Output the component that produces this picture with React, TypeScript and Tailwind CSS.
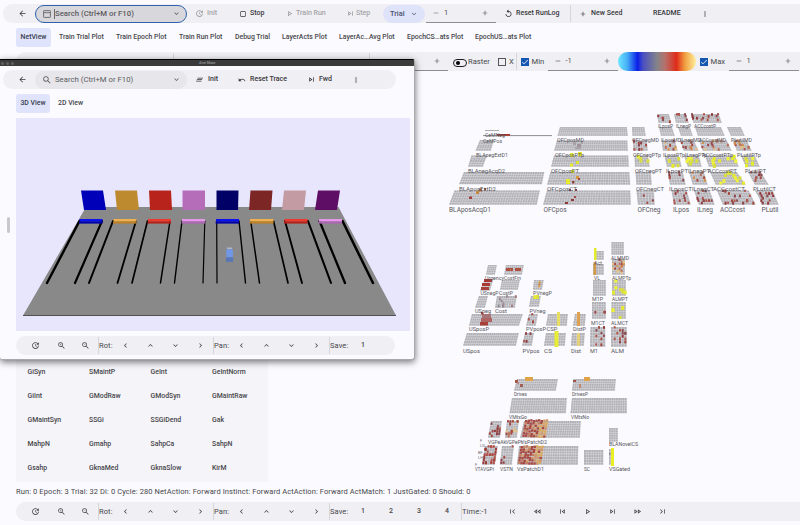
import React from "react";
import {
  MdArrowBack, MdSearch, MdKeyboardArrowDown, MdKeyboardArrowUp, MdKeyboardArrowLeft, MdKeyboardArrowRight,
  MdUpdate, MdOutlineCropSquare, MdOutlinePlayArrow, MdOutlineSkipNext, MdOutlineSkipPrevious, MdRemove, MdAdd,
  MdReplay, MdMoreVert, MdClearAll, MdUndo, MdZoomIn, MdZoomOut, MdFirstPage, MdLastPage,
  MdOutlineFastRewind, MdOutlineFastForward, MdCheck,
} from "react-icons/md";

type Kids = { children?: React.ReactNode };

/* Fixed-width toolbar slot; contents start at its left edge. */
const Slot = ({ w, c = "", children }: Kids & { w: string; c?: string }) => (
  <div className={`flex h-full shrink-0 items-center whitespace-nowrap ${w} ${c}`}>{children}</div>
);
const Ic = ({ w, c = "", children }: Kids & { w: string; c?: string }) => (
  <div className={`flex h-full shrink-0 items-center justify-center ${w} ${c}`}>{children}</div>
);
const Sep = () => <div className="h-[17px] w-px shrink-0 bg-[#d6d5da]" />;

function Spinner({ value, w = "w-[70px]" }: { value: string; w?: string }) {
  return (
    <div className={`flex h-[18px] shrink-0 items-center border-b border-[#8d8c92] text-[7.5px] text-[#55555b] ${w}`}>
      <Ic w="w-[18px]" c="pl-[2px]"><MdRemove size={8} /></Ic>
      <span className="grow">{value}</span>
      <Ic w="w-[22px]"><MdAdd size={8} /></Ic>
    </div>
  );
}

function SearchBox({ active }: { active?: boolean }) {
  return (
    <div className={`flex h-[18px] w-[152px] shrink-0 items-center rounded-full border text-[#5c5c62] ${active ? "border-[#2e62ad] bg-[#d8d7db]" : "border-[#e7e6ea] bg-[#e7e6ea]"}`}>
      <Ic w="w-[18px]" c="pl-[3px]">
        {active ? (
          <svg width="8" height="8" viewBox="0 0 8 8" fill="none" stroke="#55555b" strokeWidth="0.8">
            <rect x="0.6" y="0.6" width="6.8" height="6.8" rx="0.6" /><path d="M0.6 2.7h6.8" />
          </svg>
        ) : <MdSearch size={10} />}
      </Ic>
      <span className={`grow whitespace-nowrap text-[7.75px] leading-[10px] ${active ? "border-l border-[#6a6a70]" : "pl-px"}`}>Search (Ctrl+M or F10)</span>
      <Ic w="w-[20px]"><MdKeyboardArrowDown size={9} /></Ic>
    </div>
  );
}

const Check = ({ on }: { on?: boolean }) => (
  <div className={`flex h-[8px] w-[8px] items-center justify-center ${on ? "bg-[#1556b0] text-white" : "border border-[#55555a]"}`}>
    {on && <MdCheck size={8} />}
  </div>
);

function TopBar() {
  return (
    <div className="ml-[3px] mt-[4px] flex h-[19px] items-center overflow-hidden rounded-l-full bg-[#f0eff3] text-[7px] font-medium text-[#38383c]">
      <Ic w="w-[32px]" c="pl-[7px]"><MdArrowBack size={9} /></Ic>
      <SearchBox active />
      <Ic w="w-[20px]" c="pl-[5px] text-[#9b9ba0]"><MdUpdate size={9} /></Ic>
      <Slot w="w-[29px]" c="text-[#a5a5aa]">Init</Slot>
      <Ic w="w-[13px]"><MdOutlineCropSquare size={8} /></Ic>
      <Slot w="w-[34px]" c="pl-px">Stop</Slot>
      <Ic w="w-[12px]" c="text-[#9b9ba0]"><MdOutlinePlayArrow size={9} /></Ic>
      <Slot w="w-[49px]" c="pl-px text-[#a5a5aa]">Train Run</Slot>
      <Ic w="w-[12px]" c="text-[#9b9ba0]"><MdOutlineSkipNext size={9} /></Ic>
      <Slot w="w-[27px]" c="text-[#a5a5aa]">Step</Slot>
      <div className="flex h-[18px] w-[42px] shrink-0 items-center gap-[3px] rounded-full bg-[#dfe3f9] pl-[7px] text-[7.4px] text-[#47506a]">
        <span className="w-[17px]">Trial</span><MdKeyboardArrowDown size={8} />
      </div>
      <Slot w="w-[72px]" c="pl-px font-normal"><Spinner value="1" /></Slot>
      <Ic w="w-[18px]" c="pl-[5px]"><MdReplay size={9} /></Ic>
      <Slot w="w-[55px]" c="pl-px">Reset RunLog</Slot>
      <Sep />
      <Ic w="w-[20px]" c="pl-[4px]"><MdAdd size={8} /></Ic>
      <Slot w="w-[62px]">New Seed</Slot>
      <Slot w="w-[46px]">README</Slot>
      <Ic w="w-[12px]"><MdMoreVert size={8} /></Ic>
    </div>
  );
}

function Tabs() {
  return (
    <div className="mt-[5px] flex h-[19px] items-center text-[6.9px] font-medium text-[#47474c]">
      <Slot w="w-[35px]" c="ml-[16px] justify-center rounded-[3px] bg-[#dfe3fb] text-[#383d50]">NetView</Slot>
      <Slot w="w-[57px]" c="ml-[8px]">Train Trial Plot</Slot>
      <Slot w="w-[63px]">Train Epoch Plot</Slot>
      <Slot w="w-[56px]">Train Run Plot</Slot>
      <Slot w="w-[47px]">Debug Trial</Slot>
      <Slot w="w-[57px]">LayerActs Plot</Slot>
      <Slot w="w-[68px]">LayerAc…Avg Plot</Slot>
      <Slot w="w-[68px]">EpochCS…ats Plot</Slot>
      <Slot w="w-[68px]">EpochUS…ats Plot</Slot>
    </div>
  );
}

function ViewBar() {
  return (
    <div className="ml-[16px] mt-[5px] flex h-[19px] items-center rounded-l-full bg-[#f0eff3] text-[7.6px] text-[#47474c]">
      <Slot w="w-[157px]" />
      <Sep />
      <Slot w="w-[195px]" />
      <Sep />
      <Slot w="w-[78px]" c="justify-end"><Spinner value="" w="w-[78px]" /></Slot>
      <Ic w="w-[20px]" c="pl-[4px] pt-[2px]">
        <div className="flex h-[8px] w-[14px] items-center rounded-full border border-[#1d1d20] pl-[2px]"><div className="h-[4px] w-[4px] rounded-full bg-black" /></div>
      </Ic>
      <Slot w="w-[30px]">Raster</Slot>
      <Slot w="w-[11px]"><Check /></Slot>
      <Slot w="w-[7px]">X</Slot>
      <Sep />
      <Slot w="w-[14.5px]" c="pl-[4px]"><Check on /></Slot>
      <Slot w="w-[16px]">Min</Slot>
      <Spinner value="-1" />
      <div className="h-[19px] w-[78px] shrink-0 rounded-full bg-[linear-gradient(90deg,#6ee6ff_0%,#45aef5_12%,#0b1fe8_25%,#4a4fc0_32%,#84848a_50%,#b5726c_60%,#e02c1a_75%,#f0a040_86%,#ffef9e_100%)]" />
      <Slot w="w-[15px]" c="pl-[4px]"><Check on /></Slot>
      <Slot w="w-[18px]">Max</Slot>
      <Spinner value="1" />
    </div>
  );
}

/* Orbit / pan / save controls shared by both 3D views. */
function SceneControls({ full }: { full?: boolean }) {
  const arrows = (
    <>
      <Ic w="w-[25px]"><MdKeyboardArrowLeft size={9} /></Ic>
      <Ic w="w-[25px]"><MdKeyboardArrowUp size={9} /></Ic>
      <Ic w="w-[25px]"><MdKeyboardArrowDown size={9} /></Ic>
      <Ic w="w-[25px]"><MdKeyboardArrowRight size={9} /></Ic>
    </>
  );
  return (
    <div className={`ml-[16px] flex h-[19px] shrink-0 items-center overflow-hidden bg-[#f0eff3] text-[#47474c] ${full ? "rounded-l-full" : "w-[379px] rounded-full"}`}>
      <Ic w="w-[39px]"><MdUpdate size={9} /></Ic>
      <Ic w="w-[13px]"><MdZoomIn size={9} /></Ic>
      <Ic w="w-[30px]" c="pl-[5px]"><MdZoomOut size={9} /></Ic>
      <Sep />
      <Slot w="w-[14px]" c="text-[7.5px] tracking-[0.1px]">Rot:</Slot>
      {arrows}
      <Sep />
      <Slot w="w-[15px]" c="text-[7.5px] tracking-[0.1px]">Pan:</Slot>
      {arrows}
      <Sep />
      <Slot w="w-[19px]" c="text-[7.5px] tracking-[0.1px]">Save:</Slot>
      <Ic w="w-[28px]" c="text-[7px] font-medium">1</Ic>
      {full && (
        <>
          <Ic w="w-[28px]" c="text-[7px] font-medium">2</Ic>
          <Ic w="w-[28px]" c="text-[7px] font-medium">3</Ic>
          <Ic w="w-[28px]" c="text-[7px] font-medium">4</Ic>
          <Sep />
          <Slot w="w-[38px]" c="text-[7.5px] tracking-[0.1px]">Time:-1</Slot>
          <Ic w="w-[25px]"><MdFirstPage size={9} /></Ic>
          <Ic w="w-[25px]"><MdOutlineFastRewind size={9} /></Ic>
          <Ic w="w-[25px]"><MdOutlineSkipPrevious size={9} /></Ic>
          <Ic w="w-[25px]"><MdOutlinePlayArrow size={9} /></Ic>
          <Ic w="w-[25px]"><MdOutlineSkipNext size={9} /></Ic>
          <Ic w="w-[25px]"><MdOutlineFastForward size={9} /></Ic>
          <Ic w="w-[25px]"><MdLastPage size={9} /></Ic>
        </>
      )}
    </div>
  );
}

const vars = [
  "GiSyn", "SMaintP", "GeInt", "GeIntNorm", "GiInt", "GModRaw", "GModSyn", "GMaintRaw", "GMaintSyn", "SSGi",
  "SSGiDend", "Gak", "MahpN", "Gmahp", "SahpCa", "SahpN", "Gsahp", "GknaMed", "GknaSlow", "KirM",
];

/* name, label x, label baseline, label width, topL, topR, botL, botR, yTop, yBot, cols, rows, active cells */
type Layer = [string, number, number, number, number, number, number, number, number, number, number, number, string];
const layers: Layer[] = [
  ["OFCposMD", 557, 142, 27, 560, 627, 557.5, 628, 127, 136, 34, 5, ""],
  ["OFCnegMD", 632, 142, 27, 632, 644.5, 632.5, 646, 127, 136, 6, 5, ""],
  ["ILposP", 658, 127.5, 15, 657, 669, 658.5, 671.5, 114, 123, 6, 5, "r5"],
  ["ILnegP", 676, 127.5, 15, 674, 686, 676, 689, 114, 123, 6, 5, "r6"],
  ["ACCcostP", 694, 127.5, 22, 691, 719, 693.5, 722, 114, 123, 14, 5, "r13"],
  ["ILposMD", 661, 142, 20, 659, 672, 661, 675, 127, 136, 6, 5, ""],
  ["ILnegMD", 680, 142, 21, 678, 690, 681, 693, 127, 136, 6, 5, ""],
  ["ACCcostMD", 699, 142, 27, 695, 721, 698, 725, 127, 136, 13, 5, ""],
  ["PLutilMD", 731, 142, 21, 727, 741, 731, 745, 127, 136, 6, 5, ""],
  ["CeMPos", 483, 142.5, 19, 480, 494, 475.5, 491, 140, 151, 6, 5, ""],
  ["OFCposPTp", 555, 156.5, 29, 557, 627.5, 554, 628, 140.5, 151, 34, 5, ""],
  ["OFCnegPTp", 633, 156.5, 28, 633, 647, 633.5, 648, 140.5, 151, 6, 5, "r9"],
  ["ILposPTp", 663, 156.5, 22, 661.5, 675, 663, 678, 140.5, 151, 6, 5, "m8"],
  ["ILnegPTp", 685, 156.5, 22, 680, 694, 684, 699, 140.5, 151, 6, 5, "m10"],
  ["ACCcostPTp", 702, 156.5, 31, 699, 727, 703, 732, 140.5, 151, 13, 5, "m15"],
  ["PLutilPTp", 737, 156.5, 24, 733, 747, 737, 752, 140.5, 151, 6, 5, "m15"],
  ["BLApegExtD1", 476, 156.5, 32, 471.5, 487, 468, 483, 155.5, 167, 6, 5, ""],
  ["OFCposPT", 551, 173, 28, 554, 628.5, 551, 629, 155.5, 167, 34, 5, ""],
  ["OFCnegPT", 635, 173, 27, 634.5, 648, 635, 650, 155.5, 167, 6, 5, "y4"],
  ["ILposPT", 666, 173, 22, 664.5, 679, 667, 682, 155.5, 167, 6, 5, "y5"],
  ["ILnegPT", 688, 173, 22, 684, 699, 688, 702, 155.5, 167, 6, 5, "y7"],
  ["ACCcostPT", 708, 173, 29, 705, 735, 709, 739, 155.5, 167, 13, 5, "y10"],
  ["PLutilPT", 745, 173, 21, 741, 755, 746, 760, 155.5, 167, 6, 5, "y5"],
  ["BLAnegAcqD2", 468, 172.5, 37, 464, 544.5, 459, 542, 172, 184.5, 35, 5, ""],
  ["OFCposCT", 547, 191, 30, 550.5, 629.5, 547, 630.5, 172, 185, 34, 5, ""],
  ["OFCnegCT", 636, 191, 28, 635.5, 651, 636.5, 652, 172, 185, 6, 5, ""],
  ["ILposCT", 669, 191, 23, 668, 683, 670, 686, 172, 185, 6, 5, "r8"],
  ["ILnegCT", 692, 191, 22, 689, 704, 693, 708, 172, 185, 6, 5, "m9"],
  ["ACCcostCT", 713, 191, 32, 710, 737, 716, 746, 172, 185, 13, 5, "y10"],
  ["PLutilCT", 753, 191, 23, 748, 761, 755, 769, 172, 185, 6, 5, "r10"],
  ["BLAposExtD2", 459, 190.5, 37, 454.5, 540, 449, 537, 190.5, 205, 35, 6, ""],
  ["BLAposAcqD1", 449, 211.5, 42, 0, 0, 0, 0, 0, 0, 0, 0, ""],
  ["OFCpos", 543.5, 211.5, 23, 547, 630.5, 543, 631, 190.5, 205, 34, 6, ""],
  ["OFCneg", 637.5, 211.5, 23, 636.5, 654, 638, 655, 190.5, 205, 6, 6, "r3"],
  ["ILpos", 673, 211.5, 16, 671.5, 687, 674, 691, 190.5, 205, 6, 6, "r10"],
  ["ILneg", 697, 211.5, 16, 694, 710, 699, 715, 190.5, 205, 6, 6, "r13"],
  ["ACCcost", 720, 211.5, 25, 717, 749, 723, 756, 190.5, 205, 13, 6, "r21"],
  ["PLutil", 761.5, 211.5, 17, 755, 773, 763, 779, 190.5, 205, 6, 6, "r14"],
  ["Urgency", 485, 279.5, 19, 488, 497, 486, 495, 265, 275, 5, 5, ""],
  ["CostFin", 504, 279.5, 17, 506, 524, 504, 522, 265, 275, 9, 5, ""],
  ["USnegP", 480.5, 295, 18, 484, 493, 480, 490, 281, 291, 5, 5, ""],
  ["CostP", 499, 295, 14, 502, 520, 500, 518, 280, 290, 9, 5, ""],
  ["USneg", 475, 313, 16, 479, 488, 475, 485, 296, 308, 5, 5, ""],
  ["Cost", 495, 313, 12, 497, 517, 495, 515, 296, 308, 9, 5, "g9"],
  ["USposP", 469, 331, 20, 472, 523, 469, 519, 314, 326, 25, 5, ""],
  ["USpos", 463, 352.5, 17, 467, 519, 463, 516, 333, 346, 25, 5, ""],
  ["PVnegP", 533, 295, 19, 534, 544, 533, 542, 280, 290, 4, 5, "o3"],
  ["PVneg", 529.5, 313, 16, 531, 541, 529, 539, 296, 307, 4, 5, "y3"],
  ["PVposP", 526, 331, 20, 529, 538, 526, 536, 314, 326, 4, 5, "r3"],
  ["CSP", 546.5, 331, 11, 548, 568, 546, 567, 314, 326, 9, 5, ""],
  ["PVpos", 522.5, 352.5, 17, 525, 534, 522, 532, 333, 346, 4, 5, "r4"],
  ["CS", 544, 352.5, 8, 546, 566, 544, 565, 333, 346, 9, 5, ""],
  ["DistP", 573, 331, 13, 575, 586, 573, 585, 314, 326, 5, 5, ""],
  ["Dist", 571, 352.5, 10, 572, 585, 571, 584, 333, 346, 5, 5, ""],
  ["Act", 594, 265, 8, 594, 604, 594, 604, 251, 260, 4, 4, ""],
  ["VL", 594, 279.5, 6, 593, 604, 593, 604, 264, 275, 4, 4, ""],
  ["M1P", 592, 301, 11, 593, 606, 593, 606, 280, 296, 6, 7, ""],
  ["M1CT", 591, 325, 14, 592, 606, 592, 606, 302, 319, 6, 7, "r4"],
  ["M1", 590, 352.5, 8, 590.5, 605.5, 590, 605.5, 327, 347, 6, 7, "r10"],
  ["ALMMD", 611, 260, 18, 611.5, 624, 611.5, 624, 242, 255, 6, 6, ""],
  ["ALMPTp", 612, 279.5, 19, 612, 625, 612, 625, 259, 275, 6, 7, "m19"],
  ["ALMPT", 612, 301, 16, 612, 626, 612, 626, 280, 296, 6, 7, "y7"],
  ["ALMCT", 611, 325, 17, 611.5, 626, 611.5, 626, 302, 319, 6, 7, "y4"],
  ["ALM", 611, 352.5, 13, 611, 627, 611, 627, 327, 347, 6, 7, "r14"],
  ["Drives", 514, 396, 13, 517, 558, 514, 556, 379, 391, 20, 5, ""],
  ["DrivesP", 572, 396, 16, 573.5, 616, 572, 615, 379, 391, 20, 5, ""],
  ["VMtxGo", 509, 418.5, 18, 512, 567, 509.5, 566, 398, 413.5, 25, 6, ""],
  ["VMtxNo", 571, 418.5, 18, 572, 627, 570.5, 627, 398, 413.5, 25, 6, ""],
  ["VGPeAk", 488, 443.5, 18, 491, 502, 488, 500, 421, 438, 5, 7, "r13"],
  ["VGPePr", 505.5, 443.5, 17, 507, 519, 505, 517, 421, 438, 5, 7, "m19"],
  ["VsPatchD2", 521, 443.5, 26, 524, 581, 520, 580, 421, 438, 26, 7, ""],
  ["VGPi", 483, 470.5, 11, 485, 498, 482, 495, 446, 465, 5, 7, "d30"],
  ["VSTN", 500, 470.5, 13, 502, 514, 500, 512, 446, 465, 5, 7, "r5"],
  ["VsPatchD1", 517, 470.5, 27, 519, 578.5, 517, 578, 446, 465, 26, 7, ""],
  ["SC", 584, 470.5, 6, 584, 603.5, 584, 603.5, 450, 465, 8, 6, ""],
  ["BLANovelCS", 609, 445.5, 29, 609, 618, 609, 618, 428, 442, 4, 6, ""],
  ["VSGated", 609, 470.5, 21, 609, 613, 609, 613, 449, 465, 2, 6, ""],
  ["VTA", 475, 470.5, 8, 0, 0, 0, 0, 0, 0, 0, 0, ""],
];

/* Raised units drawn over their layers: x, y, w, h, colour */
const marks: [number, number, number, number, string][] = [
  [485, 130, 14, 0.8, "#98989c"], [483, 135, 69, 1.1, "#97979c"], [497, 134, 13, 1.8, "#a7332b"],
  [476, 191, 3, 3, "#c8873a"], [479, 188.5, 3, 3, "#b56a3c"], [484, 188, 2, 2.5, "#a34a35"], [469, 196.5, 3, 2.5, "#a04040"],
  [573, 142, 3, 3, "#a9a0a4"], [577, 144, 4, 3, "#9e9499"], [581, 141, 2, 3, "#a9a0a4"], [575, 147, 6, 2, "#aaa2a6"],
  [570, 153, 3.5, 4, "#e6ec2b"], [578, 152, 4, 4, "#e6ec2b"], [570, 163.5, 3, 3, "#e6ec2b"], [576, 161, 3, 3, "#dce32c"],
  [571, 170, 3, 3, "#e6ec2b"], [566, 179, 4, 5, "#e6ec2b"], [572, 181, 2.4, 2.4, "#963c3c"], [576, 176, 3, 3, "#d99a3c"], [578, 178, 2, 2, "#a34040"],
  [565, 202, 3, 2, "#913a3e"], [571, 199, 3, 2, "#913a3e"], [574, 196, 2, 2, "#a24a4c"], [569, 189, 2, 2, "#7e3c3e"], [575, 189, 2, 2, "#913a3e"],
  [506, 268, 7, 3, "#ad4f43"], [515, 268, 6, 3, "#ad4f43"], [510, 269, 1, 1.4, "#c58b3c"],
  [484, 279, 8, 3, "#a93a34"], [482, 283, 8, 3, "#a93a34"], [481, 287, 8, 3, "#a8423a"],
  [482, 314, 9, 4, "#a47476"], [481, 318, 11, 4, "#ad6462"], [480, 322, 8, 3.5, "#a83e38"], [481, 312, 2.5, 2.5, "#a04040"],
  [557, 312, 3, 14, "#e7df62"], [554.5, 331, 4, 16, "#e7ec35"], [577, 312, 3, 14, "#dda151"], [577, 333, 3, 13, "#e5cf78"],
  [594, 248, 2.5, 12, "#e4ea2c"], [593.5, 262, 2.5, 13, "#d49947"],
  [525, 377, 8, 4, "#dfa34a"], [515, 380, 3, 3, "#a65248"], [520, 384, 3, 3, "#a06054"], [517, 382, 2, 2, "#b28c84"],
  [584, 377, 6, 4, "#dfa34a"], [573, 380, 3, 2, "#a65248"], [579, 384, 2, 4, "#c08a72"],
  [609, 453, 1.5, 1.5, "#777777"], [611, 448, 3, 18, "#e8ef22"],
];

const P: Record<string, string[]> = {
  r: ["#913a3e", "#a34840", "#8a4a50", "#b0564c"],
  y: ["#e4ea2c", "#eef13a", "#d8dd42"],
  m: ["#a9493e", "#d58f4c", "#b9705a", "#9a4a48", "#dfc28a"],
  o: ["#d9a04e", "#b57a5a"],
  g: ["#9c8b8e", "#a87c7e", "#948a8e"],
  d: ["#a8423a", "#b4544a", "#9c3a36"],
};

function Grid({ l, seed }: { l: Layer; seed: number }) {
  const [, , , , tl, tr, bl, br, yt, yb, cols, rows, act] = l;
  if (!cols) return null;
  const at = (u: number, v: number) => {
    const x0 = tl + (bl - tl) * v, x1 = tr + (br - tr) * v;
    return [x0 + (x1 - x0) * u, yt + (yb - yt) * v];
  };
  const cell = (c: number, r: number) => {
    const p = [at(c / cols, r / rows), at((c + 0.82) / cols, r / rows), at((c + 0.82) / cols, (r + 0.8) / rows), at(c / cols, (r + 0.8) / rows)];
    return "M" + p.map((q) => q[0].toFixed(2) + " " + q[1].toFixed(2)).join("L") + "Z";
  };
  let d = "";
  for (let c = 0; c < cols; c++) for (let r = 0; r < rows; r++) d += cell(c, r);
  let s = seed * 7919 + 17;
  const rnd = () => ((s = (s * 16807) % 2147483647) / 2147483647);
  for (let k = 0; k < 5; k++) rnd();
  const kind = act[0];
  const n = act ? parseInt(act.slice(1)) : 0;
  const big = kind === "y" ? 3 : 2;
  return (
    <g>
      <path d={`M${tl} ${yt}L${tr} ${yt}L${br} ${yb}L${bl} ${yb}Z`} fill="#dddde1" />
      <path d={d} fill="#b1b0b6" />
      {Array.from({ length: n }, (_, i) => {
        const [x, y] = at(Math.floor(rnd() * cols) / cols, Math.floor(rnd() * rows) / rows);
        return <rect key={i} x={x} y={y - 0.8} width={big} height={big + rnd()} fill={P[kind][Math.floor(rnd() * P[kind].length)]} />;
      })}
    </g>
  );
}

/* Dense activity blocks at the left of each patch layer. */
function Patch({ x, y, h }: { x: number; y: number; h: number }) {
  const out = [];
  const n = 9;
  for (let c = 0; c < n; c++)
    for (let r = 0; r < 7; r++) {
      const k = (c * 31 + r * 17 + c * r * 7 + y) % 10;
      const col = c < 6 ? (k < 7 ? "#a94a42" : k < 9 ? "#c47e62" : "#d6a070") : k < 5 ? "#dca85c" : k < 7 ? "#a94a42" : "#cf9468";
      out.push(<rect key={c + "-" + r} x={x + c * 2.6 - r * 0.45} y={y + (r * h) / 7 - (k % 3) * 0.4} width={2.4} height={h / 7 - 0.3} fill={col} />);
    }
  return <g>{out}</g>;
}

function NetView() {
  return (
    <svg className="ml-[430px] block h-[411px] w-[370px] shrink-0" viewBox="430 71 370 411" fontFamily="Roboto, sans-serif">
      {layers.map((l, i) => <Grid key={i} l={l} seed={i + 3} />)}
      <Patch x={525} y={420} h={18} />
      <Patch x={520.5} y={446} h={19} />
      {marks.map((m, i) => <rect key={i} x={m[0]} y={m[1]} width={m[2]} height={m[3]} fill={m[4]} />)}
      {layers.map((l, i) => (
        <text key={i} x={l[1]} y={l[2]} textLength={l[3]} lengthAdjust="spacingAndGlyphs" fontSize={l[2] > 390 ? 5 : l[2] > 215 ? 5.6 : l[2] > 200 ? 6.8 : 5.9} fill="#55555a">{l[0]}</text>
      ))}
      <text x={485} y={137} textLength={20} lengthAdjust="spacingAndGlyphs" fontSize="5" fill="#55555a">CeMNeg</text>
      <g fontSize="4" fill="#68686d">
        <text x="480" y="441.5">F</text><text x="480" y="446.5">LD</text>
        <text x="478" y="453.5">BF</text><text x="478" y="459">LH</text><text x="475" y="465.5">F</text>
      </g>
    </svg>
  );
}

const boxes: [string, string][] = [
  ["81,190.5 103,190.5 106,210 84,210", "#0000b9"],
  ["115,190.5 137,190.5 139,210 117,210", "#bd8a30"],
  ["149,190.5 171,190.5 172,210 150,210", "#b8241b"],
  ["182.5,190.5 205,190.5 205,210 182.5,210", "#b56dba"],
  ["216.5,190.5 238.5,190.5 238,210 216.5,210", "#000066"],
  ["250.5,190.5 272.5,190.5 271,210 249,210", "#7d2626"],
  ["284,190.5 306,190.5 304,210 282,210", "#c39ba2"],
  ["318,190.5 340,190.5 337,210 315,210", "#5f0e66"],
];
const bars: [number, number, string, string][] = [
  [79.5, 102.5, "#0a10ee", "#0000a8"], [113.5, 136.5, "#f0b050", "#b98028"], [148, 171, "#ee3a2c", "#b3241c"], [182, 205, "#e598ea", "#ab68b2"],
  [216, 239, "#0a10ee", "#0000a8"], [250, 273.5, "#f0b050", "#b98028"], [284.5, 307.5, "#ee3a2c", "#b3241c"], [319, 342, "#e598ea", "#ab68b2"],
];
const walls: [number, number, number][] = [
  [79.5, 47, 2.4], [102, 75, 2.2], [113, 89, 2], [136, 117.5, 1.8], [147.5, 132, 1.7], [170, 160.5, 1.5], [182, 174.5, 1.4], [204.8, 203, 1.2],
  [216.7, 217, 1.2], [239, 245.5, 1.4], [250.7, 259.5, 1.5], [273.5, 288, 1.7], [285, 302, 1.9], [308, 331, 2.1], [319.5, 345, 2.3], [342.5, 373, 2.5],
];

function Arena() {
  return (
    <svg className="ml-[16px] mt-[5px] block h-[213px] w-[394px] shrink-0 bg-[#e8e6fd]" viewBox="16 118 394 213">
      <polygon points="86,207 338.5,207 396,315.5 23,315.5" fill="#898989" />
      <path d="M23 315.5H396" stroke="#444449" strokeWidth="0.9" />
      {boxes.map((b, i) => <polygon key={i} points={b[0]} fill={b[1]} />)}
      {walls.map((w, i) => <path key={i} d={`M${w[0]} 221L${w[1]} 283`} stroke="#000" strokeWidth={w[2]} strokeLinecap="round" />)}
      {bars.map((b, i) => (
        <g key={i}>
          <rect x={b[0]} y={219} width={b[1] - b[0]} height={2.6} fill={b[2]} />
          <rect x={b[0] - 0.4} y={221.4} width={b[1] - b[0] + 0.4} height={2.2} fill={b[3]} />
        </g>
      ))}
      <rect x="227" y="247.5" width="5" height="1.8" fill="#b4b4c4" />
      <rect x="226.3" y="249.3" width="6.6" height="8" fill="#7198e6" />
      <rect x="226" y="257.3" width="7.2" height="4.5" fill="#5876b8" />
    </svg>
  );
}

function ArmMaze() {
  return (
    <div className="absolute left-0 top-[59px] flex h-[301px] w-[415px] flex-col overflow-hidden rounded-b-[3px] rounded-tr-[2px] border-r border-b border-[#a9a8ad] bg-[#fbfaff] shadow-[0_2px_7px_rgba(0,0,0,0.55)]">
      <div className="flex h-[7px] shrink-0 items-center border-t border-black bg-[#3b3b3c] text-[#8a8a8c]">
        <div className="flex w-[199px] gap-[2px] pl-px">
          <i className="h-[3px] w-[3px] rounded-full bg-[#616162]" /><i className="h-[3px] w-[3px] rounded-full bg-[#616162]" /><i className="h-[3px] w-[3px] rounded-full bg-[#616162]" />
        </div>
        <span className="text-[3.6px] font-bold leading-[5px]">Arm Maze</span>
      </div>
      <div className="ml-[3px] mt-[4px] flex h-[19px] w-[393px] shrink-0 items-center rounded-full bg-[#f0eff3] text-[7px] font-medium text-[#38383c]">
        <Ic w="w-[32px]" c="pl-[7px]"><MdArrowBack size={9} /></Ic>
        <div className="flex font-normal"><SearchBox /></div>
        <Ic w="w-[20px]" c="pl-[5px]"><MdClearAll size={9} /></Ic>
        <Slot w="w-[28px]" c="pl-px">Init</Slot>
        <Ic w="w-[14px]"><MdUndo size={8} /></Ic>
        <Slot w="w-[56px]" c="pl-px">Reset Trace</Slot>
        <Ic w="w-[12px]"><MdOutlineSkipNext size={9} /></Ic>
        <Slot w="w-[33px]" c="pl-[2px]">Fwd</Slot>
        <Ic w="w-[12px]"><MdMoreVert size={8} /></Ic>
      </div>
      <div className="mt-[5px] flex h-[19px] shrink-0 items-center text-[6.9px] font-medium text-[#47474c]">
        <Slot w="w-[34px]" c="ml-[16px] justify-center rounded-[3px] bg-[#dfe3fb] text-[#383d50]">3D View</Slot>
        <Slot w="w-[40px]" c="ml-[8px]">2D View</Slot>
      </div>
      <Arena />
      <div className="mt-[5px] flex flex-col"><SceneControls /></div>
      <div className="absolute left-[7px] top-[158px] h-[16px] w-[3px] rounded-full bg-[#c9c8cd]" />
    </div>
  );
}

export default function App() {
  return (
    <div className="relative flex h-[525px] w-[800px] flex-col overflow-hidden bg-[#fbfaff] font-[Roboto,sans-serif] leading-none">
      <TopBar />
      <Tabs />
      <ViewBar />
      <div className="flex h-[411px]">
        <div className="-mr-[268px] ml-[16px] flex w-[252px] shrink-0 flex-col justify-end bg-[#f5f4f8]">
          <div className="grid grid-cols-[61.5px_61.5px_61.5px_auto] auto-rows-[24px] pb-[1.5px] pl-[11.5px] text-[6.9px] font-medium text-[#47474c]">
            {vars.map((v) => <div key={v} className="flex items-center">{v}</div>)}
          </div>
        </div>
        <NetView />
      </div>
      <div className="flex h-[20px] items-center whitespace-nowrap pl-[16px] text-[7.5px] tracking-[0.1px] text-[#47474c]">
        Run: 0 Epoch: 3 Trial: 32 Di: 0 Cycle: 280 NetAction: Forward Instinct: Forward ActAction: Forward ActMatch: 1 JustGated: 0 Should: 0
      </div>
      <SceneControls full />
      <ArmMaze />
    </div>
  );
}
